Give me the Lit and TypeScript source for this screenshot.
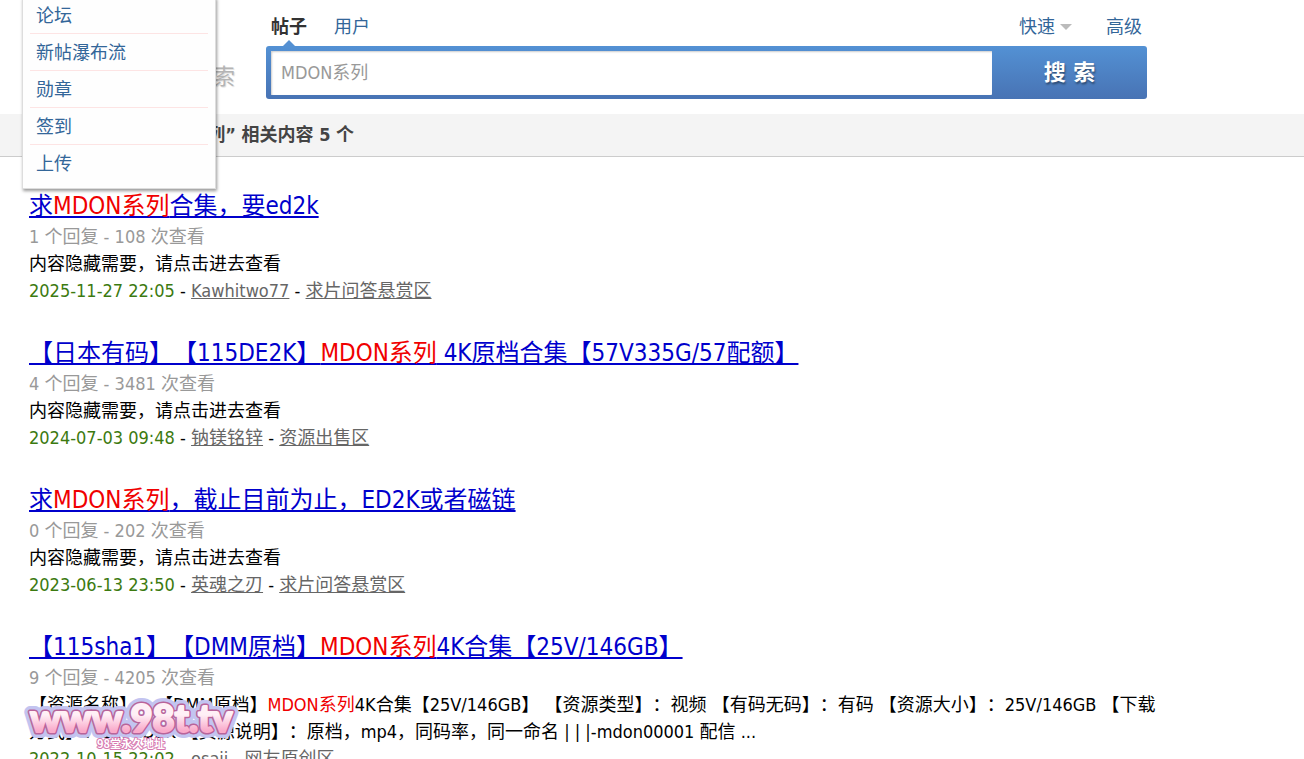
import { LitElement, html, css } from "lit";
import { customElement } from "lit/decorators.js";

interface Post {
  title: unknown;
  replies: number;
  views: number;
  body: unknown;
  date: string;
  author: string;
  forum: string;
}

const kw = html`<span class="kw">MDON系列</span>`;
const hidden = "内容隐藏需要，请点击进去查看";

const posts: Post[] = [
  { title: html`求${kw}合集，要ed2k`, replies: 1, views: 108, body: hidden, date: "2025-11-27 22:05", author: "Kawhitwo77", forum: "求片问答悬赏区" },
  { title: html`【日本有码】【115DE2K】${kw} 4K原档合集【57V335G/57配额】`, replies: 4, views: 3481, body: hidden, date: "2024-07-03 09:48", author: "钠镁铭锌", forum: "资源出售区" },
  { title: html`求${kw}，截止目前为止，ED2K或者磁链`, replies: 0, views: 202, body: hidden, date: "2023-06-13 23:50", author: "英魂之刃", forum: "求片问答悬赏区" },
  {
    title: html`【115sha1】【DMM原档】${kw}4K合集【25V/146GB】`, replies: 9, views: 4205,
    body: html`【资源名称】：【DMM原档】${kw}4K合集【25V/146GB】 【资源类型】：视频 【有码无码】：有码 【资源大小】：25V/146GB 【下载方式】：115ED2K 【资源说明】：原档，mp4，同码率，同一命名 | | |-mdon00001 配信 ...`,
    date: "2022-10-15 22:02", author: "osaji", forum: "网友原创区",
  },
];

const menu = ["论坛", "新帖瀑布流", "勋章", "签到", "上传"];

@customElement("app-root")
export class AppRoot extends LitElement {
  static styles = css`
    :host {
      display: block;
      position: relative;
      height: 100vh;
      overflow: hidden;
      background: #fff;
      color: #000;
      font: 18px/27px Tahoma, "DejaVu Sans Condensed", "Noto Sans CJK SC", sans-serif;
      font-weight: 400;
      text-spacing-trim: space-all;
    }
    * { box-sizing: border-box; }
    a { color: #369; text-decoration: none; }
    .menu {
      position: absolute;
      z-index: 2;
      top: -3px;
      left: 22px;
      width: 194px;
      margin: 0;
      padding: 0 7px 6px;
      list-style: none;
      background: #fefefe;
      border: 1px solid #ddd;
      border-top: 0;
      box-shadow: 1px 2px 3px rgba(0, 0, 0, 0.4);
    }
    .menu li { height: 37px; border-bottom: 1px solid #fde4e4; }
    .menu li:last-child { border-bottom: 0; }
    .menu a { display: block; padding: 0 6px; line-height: 38px; }
    .head {
      display: flex;
      align-items: flex-end;
      height: 114px;
      padding: 0 0 15px 29px;
    }
    .logo {
      width: 237px;
      padding: 0 31px 8px 0;
      color: #b4b4b4;
      font-size: 22px;
      line-height: 28px;
      text-align: right;
      text-shadow: 1px 1px 1px #ddd;
    }
    .search { width: 881px; }
    .tabs { display: flex; height: 33px; padding: 0 5px; }
    .tabs .on { position: relative; color: #333; font-weight: 700; margin-right: 27px; }
    .tabs .on::after {
      content: "";
      position: absolute;
      left: 12px;
      bottom: 0;
      border: 6px solid transparent;
      border-top: 0;
      border-bottom-color: #5590d2;
    }
    .tabs .quick { display: flex; align-items: center; height: 27px; gap: 5px; margin-left: auto; margin-right: 34px; }
    .tabs .quick::after { content: ""; border: 6px solid transparent; border-top-color: #bbb; border-bottom: 0; }
    .bar {
      display: flex;
      height: 53px;
      padding: 5px 0 4px 5px;
      border-radius: 3px;
      background: linear-gradient(#5391d4, #4873b4);
    }
    input {
      flex: 1;
      min-width: 0;
      padding: 0 10px 2px;
      border: 0;
      border-radius: 1px;
      background: #fff;
      color: #999;
      font: inherit;
      box-shadow: inset 1px 1px 2px #ccc;
      outline: 0;
    }
    button {
      width: 155px;
      padding: 0;
      border: 0;
      background: none;
      color: #fff;
      font: 700 22px/38px "DejaVu Sans", "Noto Sans CJK SC", sans-serif;
      text-shadow: 1px 2px 2px rgba(0, 0, 0, 0.4);
    }
    .count {
      margin: 0;
      padding: 7px 32px 8px;
      background: #f4f4f4;
      border-bottom: 1px solid #ccc;
      color: #444;
      font-size: 18px;
      font-weight: 700;
      line-height: 27px;
    }
    .list { max-width: 1188px; margin: 0; padding: 30px 29px; list-style: none; }
    .list li { margin-bottom: 30px; }
    h3 { margin: 0; padding-top: 2px; font-size: 24px; font-weight: 400; line-height: 34px; }
    h3 a { color: #0000cc; text-decoration: underline; text-underline-offset: 2px; }
    p { margin: 0; }
    .kw { color: #f00000; }
    .stat { color: #999; }
    time { color: #3c7a10; }
    .meta a { color: #666; text-decoration: underline; }
    .mark { position: absolute; z-index: 1; left: 20px; top: 692px; }
    .mark .big { font: 900 38px Lato, sans-serif; stroke-linejoin: round; }
    .mark .small { font: 700 11px "Noto Sans CJK SC", sans-serif; stroke-linejoin: round; }
  `;

  render() {
    return html`
      <ul class="menu">
        ${menu.map((m) => html`<li><a href="#">${m}</a></li>`)}
      </ul>
      <header class="head">
        <div class="logo">搜索</div>
        <form class="search" @submit=${(e: Event) => e.preventDefault()}>
          <nav class="tabs">
            <a class="on" href="#">帖子</a>
            <a href="#">用户</a>
            <a class="quick" href="#">快速</a>
            <a href="#">高级</a>
          </nav>
          <div class="bar">
            <input type="text" aria-label="搜索" .value=${"MDON系列"} />
            <button type="submit">搜 索</button>
          </div>
        </form>
      </header>
      <h2 class="count">结果: 找到 “MDON系列” 相关内容 5 个</h2>
      <ul class="list">
        ${posts.map(
          (p) => html`<li>
            <h3><a href="#">${p.title}</a></h3>
            <p class="stat">${p.replies} 个回复 - ${p.views} 次查看</p>
            <p>${p.body}</p>
            <p class="meta"><time>${p.date}</time> - <a href="#">${p.author}</a> - <a href="#">${p.forum}</a></p>
          </li>`
        )}
      </ul>
      <svg class="mark" width="232" height="64" viewBox="0 0 232 64">
        <defs>
          <linearGradient id="pink" x1="0" y1="0" x2="0" y2="1">
            <stop offset="0.45" stop-color="#fff0f6" />
            <stop offset="0.8" stop-color="#f9a9ca" />
          </linearGradient>
        </defs>
        <text class="big" x="10" y="40" fill="#c3c4f0" stroke="#c3c4f0" stroke-width="12">www.98t.tv</text>
        <text class="big" x="10" y="40" fill="#b8649a" stroke="#b8649a" stroke-width="5">www.98t.tv</text>
        <text class="big" x="10" y="40" fill="url(#pink)" stroke="url(#pink)" stroke-width="2">www.98t.tv</text>
        <text class="small" x="77" y="56" fill="#fff" stroke="#d678b0" stroke-width="2" paint-order="stroke">98堂永久地址</text>
      </svg>
    `;
  }
}
